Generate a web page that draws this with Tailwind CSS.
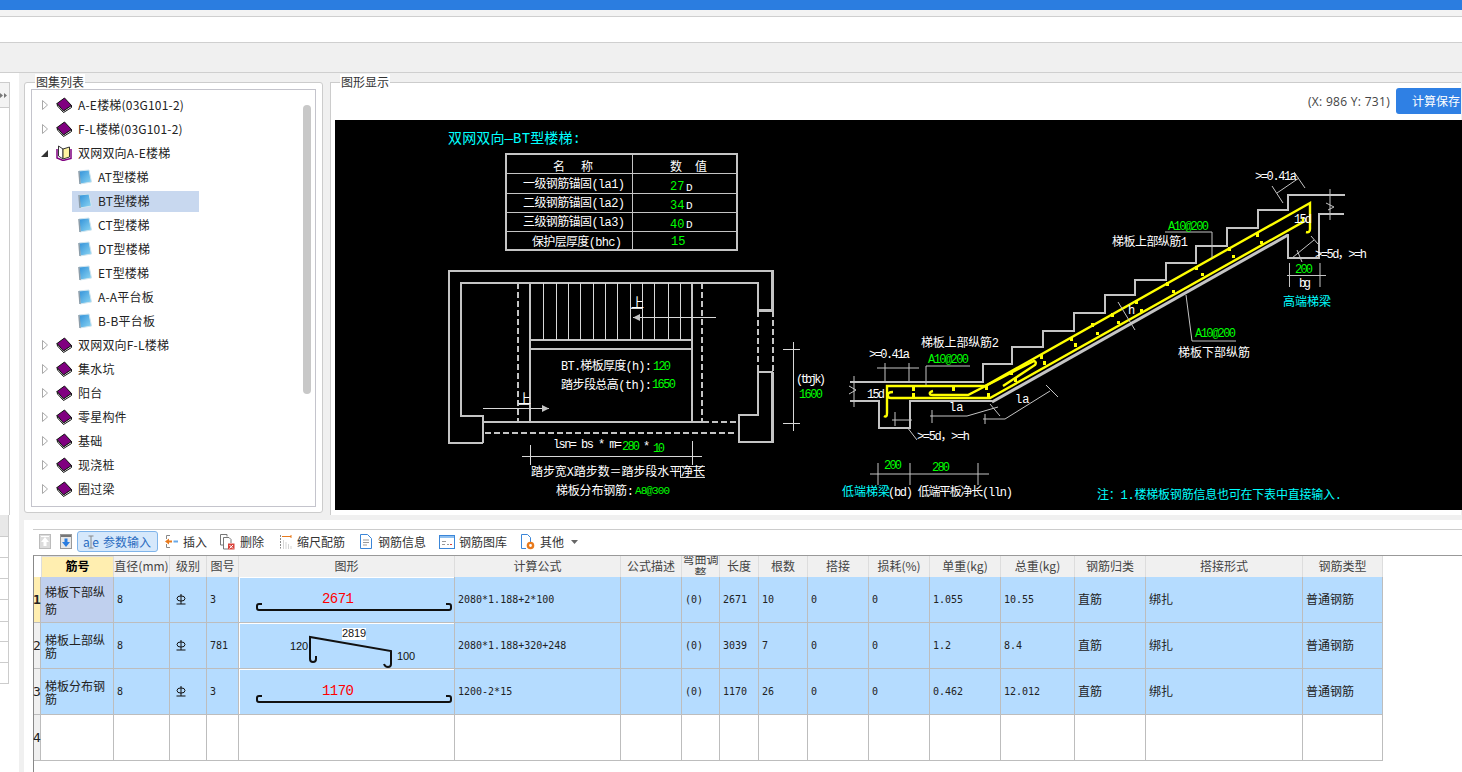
<!DOCTYPE html>
<html lang="zh-CN">
<head>
  <meta charset="UTF-8" />
  <title>图集列表</title>
  <script src="https://cdn.jsdelivr.net/npm/@tailwindcss/browser@4"></script>
</head>
<body class="w-[1462px] h-[772px] overflow-hidden bg-white text-xs text-[#222] font-['Noto_Sans_CJK_SC',sans-serif]">
  <!-- shared icons -->
  <svg width="0" height="0" class="absolute">
    <defs>
      <linearGradient id="pageFill" x1="0" y1="0" x2="1" y2="1"><stop offset="0" stop-color="#2f8fd8"/><stop offset="1" stop-color="#8fd8f4"/></linearGradient>
      <symbol id="book" viewBox="0 0 16 16">
        <path d="M1 6.5 L8.5 1 L15.5 8.5 L7.5 14 Z" fill="#800080" stroke="#111" stroke-width="1"/>
        <path d="M1 6.5 L1.5 9 L7.5 15.5 L15.5 10.5 L15.5 8.5 L7.5 14 Z" fill="#fff" stroke="#111" stroke-width="1"/>
      </symbol>
      <symbol id="openbook" viewBox="0 0 16 16">
        <path d="M2.5 1 L7 4 L7 14 L2.5 11 Z" fill="#fff" stroke="#333" stroke-width="1"/>
        <path d="M7 4 L13.5 2 L13.5 12 L7 14 Z" fill="#fdf3a0" stroke="#333" stroke-width="1"/>
        <path d="M1 4 L1 13 L7 15.5 L15 13.5 L15 4" fill="none" stroke="#800080" stroke-width="1.5"/>
      </symbol>
      <symbol id="page" viewBox="0 0 14 16">
        <path d="M1 2 L11 1 L13.5 13 L2 15 Z" fill="url(#pageFill)" stroke="#cfe4ee" stroke-width="1"/>
        <path d="M1 2 L2 15" stroke="#8c9ca8" stroke-width="1.5"/>
      </symbol>
      <symbol id="closed" viewBox="0 0 6 10"><path d="M.5 .5 L5.5 5 L.5 9.5 Z" fill="#fff" stroke="#a8a8a8"/></symbol>
      <symbol id="grade" viewBox="0 0 10 11">
        <ellipse cx="5" cy="4.5" rx="4" ry="2.6" fill="none" stroke="#111"/>
        <path d="M5 0 V10 M.5 10 H9.5" stroke="#111" fill="none"/>
      </symbol>
    </defs>
  </svg>

  <!-- title bars -->
  <div class="h-[10px] bg-[#2b7de0]"></div>
  <div class="h-[7px] bg-[#f3f3f3] border-b border-[#cfcfcf]"></div>
  <div class="h-[26px] bg-white border-b border-[#cfcfcf]"></div>
  <div class="h-[30px] bg-[#f0f0f0] border-b border-[#cfcfcf]"></div>

  <!-- upper panels -->
  <div class="flex h-[442px] bg-[#f0f0f0]">
    <div class="w-[19px] bg-white pt-[9px]">
      <div class="w-[10px] h-[433px] border-t border-r border-[#ccc] bg-white">
        <div class="h-[25px] bg-[#f3f3f3] border-b border-[#ccc] flex items-center">
          <svg class="w-2 h-[5px]" viewBox="0 0 8 5"><path d="M0 0L3 2.5L0 5ZM4 0L7 2.5L4 5Z" fill="#777"/></svg>
        </div>
      </div>
    </div>

    <!-- tree group -->
    <div class="relative ml-[5px] mt-[9px] w-[299px] h-[431px] rounded-[3px] border border-[#ccc] bg-white p-[6px]">
      <span class="absolute -top-[9px] left-[10px] px-px leading-4 text-[#333] bg-white">图集列表</span>
      <div class="relative w-[285px] h-[418px] border border-[#c4c4cc] overflow-hidden pt-[3px]">
        <div class="absolute left-[271px] top-[15px] w-2 h-[289px] rounded bg-[#c8c8c8]"></div>
        <ul class="leading-6 tracking-[0.2px]">
          <li class="h-6 flex items-center"><svg class="ml-[10px] w-[6px] h-[10px]"><use href="#closed"/></svg><svg class="ml-[8px] w-4 h-4"><use href="#book"/></svg><span class="ml-[6px]">A-E楼梯(03G101-2)</span></li>
          <li class="h-6 flex items-center"><svg class="ml-[10px] w-[6px] h-[10px]"><use href="#closed"/></svg><svg class="ml-[8px] w-4 h-4"><use href="#book"/></svg><span class="ml-[6px]">F-L楼梯(03G101-2)</span></li>
          <li class="h-6 flex items-center"><svg class="ml-[9px] w-[7px] h-[7px]" viewBox="0 0 7 7"><path d="M0 7 L7 7 L7 0 Z" fill="#333"/></svg><svg class="ml-[8px] w-4 h-4"><use href="#openbook"/></svg><span class="ml-[6px]">双网双向A-E楼梯</span></li>
          <li class="h-6 flex items-center"><svg class="ml-[46px] w-[14px] h-4"><use href="#page"/></svg><span class="ml-[6px]">AT型楼梯</span></li>
          <li class="h-6 flex items-center"><div class="ml-[40px] w-[127px] h-[21px] bg-[#c8d8ef] flex items-center"><svg class="ml-[6px] w-[14px] h-4"><use href="#page"/></svg><span class="ml-[6px]">BT型楼梯</span></div></li>
          <li class="h-6 flex items-center"><svg class="ml-[46px] w-[14px] h-4"><use href="#page"/></svg><span class="ml-[6px]">CT型楼梯</span></li>
          <li class="h-6 flex items-center"><svg class="ml-[46px] w-[14px] h-4"><use href="#page"/></svg><span class="ml-[6px]">DT型楼梯</span></li>
          <li class="h-6 flex items-center"><svg class="ml-[46px] w-[14px] h-4"><use href="#page"/></svg><span class="ml-[6px]">ET型楼梯</span></li>
          <li class="h-6 flex items-center"><svg class="ml-[46px] w-[14px] h-4"><use href="#page"/></svg><span class="ml-[6px]">A-A平台板</span></li>
          <li class="h-6 flex items-center"><svg class="ml-[46px] w-[14px] h-4"><use href="#page"/></svg><span class="ml-[6px]">B-B平台板</span></li>
          <li class="h-6 flex items-center"><svg class="ml-[10px] w-[6px] h-[10px]"><use href="#closed"/></svg><svg class="ml-[8px] w-4 h-4"><use href="#book"/></svg><span class="ml-[6px]">双网双向F-L楼梯</span></li>
          <li class="h-6 flex items-center"><svg class="ml-[10px] w-[6px] h-[10px]"><use href="#closed"/></svg><svg class="ml-[8px] w-4 h-4"><use href="#book"/></svg><span class="ml-[6px]">集水坑</span></li>
          <li class="h-6 flex items-center"><svg class="ml-[10px] w-[6px] h-[10px]"><use href="#closed"/></svg><svg class="ml-[8px] w-4 h-4"><use href="#book"/></svg><span class="ml-[6px]">阳台</span></li>
          <li class="h-6 flex items-center"><svg class="ml-[10px] w-[6px] h-[10px]"><use href="#closed"/></svg><svg class="ml-[8px] w-4 h-4"><use href="#book"/></svg><span class="ml-[6px]">零星构件</span></li>
          <li class="h-6 flex items-center"><svg class="ml-[10px] w-[6px] h-[10px]"><use href="#closed"/></svg><svg class="ml-[8px] w-4 h-4"><use href="#book"/></svg><span class="ml-[6px]">基础</span></li>
          <li class="h-6 flex items-center"><svg class="ml-[10px] w-[6px] h-[10px]"><use href="#closed"/></svg><svg class="ml-[8px] w-4 h-4"><use href="#book"/></svg><span class="ml-[6px]">现浇桩</span></li>
          <li class="h-6 flex items-center"><svg class="ml-[10px] w-[6px] h-[10px]"><use href="#closed"/></svg><svg class="ml-[8px] w-4 h-4"><use href="#book"/></svg><span class="ml-[6px]">圈过梁</span></li>
        </ul>
      </div>
    </div>

    <!-- drawing group -->
    <div class="relative ml-[7px] mt-[9px] w-[1131px] h-[433px] border-t border-l border-[#ccc] bg-white pl-[4px]">
      <span class="absolute -top-[9px] left-[9px] px-px leading-4 text-[#333] bg-white">图形显示</span>
      <div class="h-[37px] flex justify-end items-start pt-[5px]">
        <span class="mt-[6px] text-[#444] tracking-[0.3px] font-['Open_Sans',sans-serif]">(X: 986 Y: 731)</span>
        <button class="ml-[6px] w-[65px] h-[26px] rounded-l-[3px] bg-[#2f80e4] text-white text-left pl-4">计算保存</button>
      </div>
      <svg class="block bg-black" width="1127" height="390" viewBox="335 120 1127 390" font-family="'Liberation Mono','Noto Sans CJK SC',monospace" font-size="12" fill="#fff">
        <!-- parameter table -->
        <text x="448" y="143" font-size="14" fill="#0ff" textLength="133">双网双向—BT型楼梯:</text>
        <g shape-rendering="crispEdges" stroke="#c4c4c4" fill="none">
          <rect x="506" y="154" width="231" height="96" stroke-width="2"/>
          <path d="M632 154V250M506 173H737M506 193H737M506 212H737M506 231H737"/>
        </g>
        <text x="553" y="171" textLength="40">名 称</text><text x="670" y="171" textLength="37">数 值</text>
        <text x="523" y="188" textLength="102">一级钢筋锚固(la1)</text><text x="670" y="190" fill="#0f0">27</text><text x="686" y="191" font-size="11">D</text>
        <text x="523" y="207" textLength="102">二级钢筋锚固(la2)</text><text x="670" y="209" fill="#0f0">34</text><text x="686" y="209" font-size="11">D</text>
        <text x="523" y="226" textLength="102">三级钢筋锚固(la3)</text><text x="670" y="228" fill="#0f0">40</text><text x="686" y="228" font-size="11">D</text>
        <text x="532" y="246" textLength="90">保护层厚度(bhc)</text><text x="671" y="245" fill="#0f0">15</text>

        <!-- stair plan -->
        <g shape-rendering="crispEdges" stroke="#c4c4c4" fill="none" stroke-width="2.5">
          <path d="M483 443H449V271H772.5V310.5H758V283H461V416H483V443"/>
          <path d="M772.5 372H758V415H739V442H772.5V372"/>
          <path d="M530 283V422M692 283V422M483 422H703" stroke-width="2"/>
          <path d="M518 283V422M702 283V422M758 311V372M772.5 311V372M703 422H738M485 433H737" stroke-width="2" stroke-dasharray="6 3"/>
          <path d="M530 340H692M530 349H692" stroke-width="2"/>
        </g>
        <g shape-rendering="crispEdges" stroke="#d8d8d8" fill="none">
          <path d="M543 283V340M556 283V340M568 283V340M580 283V340M593 283V340M605 283V340M617 283V340M630 283V340M642 283V340M654 283V340M668 283V340M680 283V340"/>
          <path d="M631 308.5H643M633 317.5H716M519 404.5H530M483 408.5H549"/>
          <path d="M793 342V431M783 349H800M783 423H800M522 456.5H702M530 445V465M692.5 441V465"/>
          <path d="M680 466H705M680 477H705M680 466V477"/>
        </g>
        <path d="M633 317.5 L640 314 V321 Z M549 408.5 L542 405 V412 Z" fill="#c4c4c4"/>
        <text x="631" y="307" font-size="13">上</text><text x="518" y="403" font-size="13">上</text>
        <text x="561" y="370" textLength="91">BT.梯板厚度(h):</text><text x="653" y="370" fill="#0f0" textLength="18">120</text>
        <text x="561" y="389" textLength="91">踏步段总高(th):</text><text x="652" y="388" fill="#0f0" textLength="24">1650</text>
        <text x="796" y="383" textLength="30">(tbjk)</text><text x="799" y="398" fill="#0f0" textLength="24">1600</text>
        <text x="553" y="448" textLength="69">lsn= bs * m=</text><text x="622" y="450" fill="#0f0" textLength="18">280</text><text x="643" y="450">*</text><text x="653" y="452" fill="#0f0" textLength="12">10</text>
        <text x="531" y="476" textLength="174">踏步宽X踏步数＝踏步段水平净长</text>
        <text x="556" y="495" textLength="78">梯板分布钢筋:</text><text x="635" y="494" fill="#0f0" textLength="35" font-size="11">A8@300</text>

        <!-- stair section: concrete -->
        <g shape-rendering="crispEdges" stroke="#c4c4c4" fill="none" stroke-width="2">
          <path d="M850 382H983V364H1012V347H1043V331H1074V313H1105V295H1135V280H1166V263H1196V246H1227V228H1258V210H1288V195H1345"/>
          <path d="M850 400.5H879V428H910V401H992"/>
          <path d="M1288 234V258H1319V214H1344"/>
        </g>
        <path d="M992 402L1288 235" stroke="#c4c4c4" stroke-width="3" fill="none"/>
        <!-- stair section: rebar -->
        <g stroke="#ff0" stroke-width="2.4" fill="none">
          <path d="M884 416 Q887 418 887 413 V386 H985 L1310 203 V229 Q1310 233 1306 232"/>
          <path d="M893 392 Q887 392 888 396 Q888 398 891 398 H990 L1303 222 V218"/>
          <path d="M933 391 Q929 392 930 394 Q930 395 933 395 H968 L1034 361 Q1037 362 1035 365 L1003 386"/>
        </g>
        <g fill="#ff0">
          <rect x="912" y="386" width="3" height="5"/><rect x="952" y="386" width="3" height="5"/><rect x="985" y="385" width="3" height="5"/><rect x="1010" y="371" width="3" height="4"/><rect x="1040" y="355" width="3" height="4"/><rect x="1070" y="337" width="3" height="4"/>
          <rect x="912" y="393" width="3" height="5"/><rect x="987" y="393" width="3" height="5"/><rect x="1014" y="378" width="3" height="4"/><rect x="1043" y="361" width="3" height="4"/><rect x="1074" y="343" width="3" height="4"/>
          <rect x="1091" y="323" width="3" height="4"/><rect x="1111" y="313" width="3" height="4"/><rect x="1135" y="300" width="3" height="4"/><rect x="1166" y="282" width="3" height="4"/><rect x="1195" y="266" width="3" height="4"/><rect x="1228" y="247" width="3" height="4"/><rect x="1256" y="233" width="3" height="4"/>
          <rect x="1096" y="332" width="3" height="3"/><rect x="1117" y="321" width="3" height="3"/><rect x="1140" y="309" width="3" height="3"/><rect x="1172" y="290" width="3" height="3"/><rect x="1201" y="273" width="3" height="3"/><rect x="1232" y="255" width="3" height="3"/><rect x="1260" y="241" width="3" height="3"/>
        </g>
        <!-- stair section: dimensions -->
        <g stroke="#c4c4c4" fill="none">
          <path d="M877 368H919M885 363V382M909 363V382M854 376V407M849 386L856 390L849 394"/>
          <path d="M926 385V366H970M930 416H967L998 407M932 410V423M990 404L1000 416"/>
          <path d="M983 419H1005L1050 391M985 414V424M1046 385L1058 397"/>
          <path d="M892 420H912M895 412V426M907 427L917 440"/>
          <path d="M870 474H989M878 463V485M910 463V485M978 463V485"/>
          <path d="M1277 193L1299 178M1272 186L1283 203M1294 172L1305 188"/>
          <path d="M1165 232H1212V258M1186 295L1192 341H1236"/>
          <path d="M1292 258L1314 240M1297 250L1302 262M1311 236L1318 244"/>
          <path d="M1287 275.5H1326M1289.5 263V287M1320 263V287M1330 189V220M1326 203L1334 207L1328 210"/>
          <path d="M1118 302L1135 330"/>
        </g>
        <text x="869" y="358" textLength="41">&gt;=0.41a</text>
        <text x="867" y="398" textLength="18">15d</text>
        <text x="921" y="347" textLength="78">梯板上部纵筋2</text>
        <text x="928" y="363" fill="#0f0" textLength="41">A10@200</text>
        <text x="949" y="411">la</text><text x="1015" y="403">la</text>
        <text x="917" y="440" textLength="53">&gt;=5d，&gt;=h</text>
        <text x="884" y="469" fill="#0f0" textLength="18">200</text><text x="932" y="471" fill="#0f0" textLength="18">280</text>
        <text x="842" y="496" fill="#0ff" textLength="48">低端梯梁</text>
        <text x="888" y="496" textLength="125">(bd) 低端平板净长(lln)</text>
        <text x="1097" y="499" fill="#0ff" textLength="245">注：1.楼梯板钢筋信息也可在下表中直接输入.</text>
        <text x="1255" y="180" textLength="42">&gt;=0.41a</text>
        <text x="1168" y="230" fill="#0f0" textLength="41">A10@200</text>
        <text x="1112" y="246" textLength="76">梯板上部纵筋1</text>
        <text x="1294" y="223" textLength="18">15d</text>
        <text x="1315" y="258" textLength="52">&gt;=5d，&gt;=h</text>
        <text x="1295" y="273" fill="#0f0" textLength="18">200</text>
        <text x="1299" y="287" textLength="12">bg</text>
        <text x="1283" y="306" fill="#0ff" textLength="48">高端梯梁</text>
        <text x="1128" y="314">h</text>
        <text x="1195" y="337" fill="#0f0" textLength="41">A10@200</text>
        <text x="1178" y="357" textLength="72">梯板下部纵筋</text>
      </svg>
    </div>
  </div>

  <!-- lower area -->
  <div class="flex h-[257px]">
    <div class="w-[19px] bg-white">
      <div class="w-[9px] border-r border-[#ccc]">
        <div class="h-[22px] bg-[#e8e8e8] border-b border-[#ccc]"></div>
        <div class="h-[21px] border-b border-[#ccc]"></div>
        <div class="h-[21px] border-b border-[#ccc]"></div>
        <div class="h-[21px] border-b border-[#ccc]"></div>
        <div class="h-[22px] border-b border-[#ccc]"></div>
        <div class="h-[20px] border-b border-[#ccc]"></div>
        <div class="h-[21px] border-b border-[#ccc]"></div>
        <div class="h-[21px] border-b border-[#ccc]"></div>
      </div>
    </div>
    <div class="w-[5px] bg-[#f0f0f0]"></div>
    <div class="flex-1 bg-white">
      <div class="h-[5px] -ml-[5px] bg-[#f0f0f0]"></div>
      <div class="ml-[9px] mt-[9px] border-t border-[#ccc]">
        <!-- toolbar -->
        <div class="h-[25px] flex items-center pl-[6px] pb-[2px] text-[#333]">
          <svg class="w-3 h-[15px]" viewBox="0 0 12 15"><rect x=".5" y=".5" width="11" height="14" fill="#dcdcdc" stroke="#bbb"/><path d="M6 3L10 8H7.5V12H4.5V8H2Z" fill="#fff"/><path d="M2 2.5H10" stroke="#fff"/></svg>
          <svg class="ml-[9px] w-3 h-[15px]" viewBox="0 0 12 15"><rect x=".5" y=".5" width="11" height="14" fill="#e8e8e8" stroke="#999"/><rect x="1" y="1" width="10" height="2" fill="#777"/><path d="M6 13L2 8H4.5V4.5H7.5V8H10Z" fill="#2b7de0"/></svg>
          <div class="ml-[5px] w-[81px] h-[21px] rounded-[3px] border border-[#7fb4ea] bg-[#d6e8fb] flex items-center text-[#2a6cc0]">
            <svg class="ml-[5px] w-4 h-[14px]" viewBox="0 0 16 14"><path d="M5.5 1H10.5M8 1V13M5.5 13H10.5" stroke="#888" fill="none"/></svg>
            <span class="-ml-4 w-4 flex justify-between text-[12px] leading-none"><span>a</span><span>e</span></span>
            <span class="ml-[4px]">参数输入</span>
          </div>
          <svg class="ml-[7px] w-[13px] h-[15px]" viewBox="0 0 13 15"><path d="M5 1.5H1.5V5M5 13.5H1.5V10" fill="none" stroke="#888"/><path d="M0 7.5L4 4.5V6.5H7V8.5H4V10.5Z" fill="#e87a1d"/><rect x="8.5" y="6.5" width="4.5" height="2" fill="#6aa9e8"/></svg>
          <span class="ml-[5px]">插入</span>
          <svg class="ml-[13px] w-[15px] h-4" viewBox="0 0 15 16"><path d="M.5 .5H7V2.5M.5 .5V11H3.5M3.5 3.5H9L11 5.5V9M3.5 3.5V15H8" fill="#fff" stroke="#777"/><rect x="8" y="9.5" width="6.5" height="6" fill="#d9423a"/><path d="M9.5 11L13 14.5M13 11L9.5 14.5" stroke="#fff"/></svg>
          <span class="ml-[5px]">删除</span>
          <svg class="ml-[15px] w-[13px] h-[15px]" viewBox="0 0 13 15"><path d="M1.5 1V14.5" stroke="#888" fill="none" stroke-dasharray="2 1"/><path d="M4.5 14.5V6M7 14.5V8M9.5 14.5V10M12 14.5V12" stroke="#aaa" stroke-dasharray="1 1"/><path d="M3 2.5H12M12 1V4" stroke="#e87a1d"/></svg>
          <span class="ml-[5px]">缩尺配筋</span>
          <svg class="ml-[14px] w-[13px] h-[15px]" viewBox="0 0 13 15"><path d="M1.5 .5H8.5L12.5 4.5V14.5H1.5Z" fill="#fff" stroke="#3b86d8"/><path d="M4 6H10M4 8.5H10M4 11H8" stroke="#999"/></svg>
          <span class="ml-[6px]">钢筋信息</span>
          <svg class="ml-[13px] w-4 h-[14px]" viewBox="0 0 16 14"><rect x=".5" y=".5" width="15" height="13" fill="#fff" stroke="#3b86d8"/><rect x="1" y="1" width="14" height="2" fill="#8fc0f0"/><path d="M3 6.5H7M3 9.5H6M8 9.5H10" stroke="#999"/><path d="M11 9.5H13" stroke="#d9423a"/></svg>
          <span class="ml-[4px]">钢筋图库</span>
          <svg class="ml-[13px] w-[15px] h-4" viewBox="0 0 15 16"><path d="M1.5 .5H7.5L10.5 3.5V9M1.5 .5V14.5H6" fill="#fff" stroke="#3b86d8"/><circle cx="10.5" cy="11.5" r="2.6" fill="none" stroke="#e87a1d" stroke-width="2.4"/></svg>
          <span class="ml-[5px]">其他</span>
          <svg class="ml-[7px] w-[7px] h-1" viewBox="0 0 7 4"><path d="M0 0H7L3.5 4Z" fill="#666"/></svg>
        </div>
        <!-- rebar table -->
        <div class="border-t border-t-[#999] border-l border-l-[#888] h-[217px]">
          <table class="table-fixed w-[1349px] border-separate border-spacing-0 [&_td]:border-r [&_td]:border-b [&_td]:border-[#bdbdbd] [&_td]:px-[3px] [&_td]:h-[46px] [&_td]:font-['DejaVu_Sans_Mono','Noto_Sans_CJK_SC',monospace] [&_td]:text-[10px] [&_th]:h-[21px] [&_th]:pb-[2px] [&_th]:border-r [&_th]:border-[#ddd] [&_th]:bg-[#f0f0f0] [&_th]:font-normal [&_th]:text-[#444] [&_th]:px-0 [&_th]:pt-0">
            <colgroup>
              <col class="w-[7px]"><col class="w-[73px]"><col class="w-[56px]"><col class="w-[37px]"><col class="w-[32px]"><col class="w-[216px]"><col class="w-[166px]"><col class="w-[61px]"><col class="w-[38px]"><col class="w-[39px]"><col class="w-[49px]"><col class="w-[61px]"><col class="w-[61px]"><col class="w-[71px]"><col class="w-[74px]"><col class="w-[71px]"><col class="w-[157px]"><col class="w-[80px]">
            </colgroup>
            <thead>
              <tr>
                <th class="!bg-white !border-0"></th>
                <th class="!bg-[#ffeeb0] !text-black !font-bold border-t border-l border-[#7fb4ea]">筋号</th>
                <th>直径(mm)</th><th>级别</th><th>图号</th><th>图形</th><th>计算公式</th><th>公式描述</th>
                <th><div class="h-[19px] overflow-hidden flex items-center justify-center leading-[14px]"><span>弯曲调整</span></div></th>
                <th>长度</th><th>根数</th><th>搭接</th><th>损耗(%)</th><th>单重(kg)</th><th>总重(kg)</th><th>钢筋归类</th><th>搭接形式</th><th>钢筋类型</th>
              </tr>
            </thead>
            <tbody class="[&_tr:not(:last-child)_td]:bg-[#b5dcff]">
              <tr>
                <td class="!p-0 !bg-[#ffeeb0] text-center"><b class="-ml-px text-[13px]">1</b></td>
                <td class="!bg-[#c0d0ee] !pl-1"><span class="block text-xs leading-[17px] text-[#222] font-['Noto_Sans_CJK_SC',sans-serif]">梯板下部纵筋</span></td>
                <td>8</td><td><svg class="ml-[3px] w-[10px] h-[11px]"><use href="#grade"/></svg></td><td>3</td>
                <td class="!p-0 !bg-white">
                  <svg class="block w-[214px] h-11 mx-px bg-[#b5dcff]" viewBox="239 577 214 44" font-family="'Liberation Mono',monospace"><path d="M261 603H258Q256 603 256 605V607Q256 609 258 609H448Q450 609 450 607V605Q450 603 448 603H445" fill="none" stroke="#111" stroke-width="2"/><text x="321" y="602" fill="#f00" font-size="14" textLength="32">2671</text></svg>
                </td>
                <td>2080*1.188+2*100</td><td></td><td>(0)</td><td>2671</td><td>10</td><td>0</td><td>0</td><td>1.055</td><td>10.55</td>
                <td><span class="text-xs font-['Noto_Sans_CJK_SC',sans-serif]">直筋</span></td><td><span class="text-xs font-['Noto_Sans_CJK_SC',sans-serif]">绑扎</span></td><td><span class="text-xs font-['Noto_Sans_CJK_SC',sans-serif]">普通钢筋</span></td>
              </tr>
              <tr>
                <td class="!p-0 !bg-[#f0f0f0] text-center"><span class="-ml-px text-[13px]">2</span></td>
                <td class="!pl-1"><span class="block text-xs leading-[13px] font-['Noto_Sans_CJK_SC',sans-serif]">梯板上部纵筋</span></td>
                <td>8</td><td><svg class="ml-[3px] w-[10px] h-[11px]"><use href="#grade"/></svg></td><td>781</td>
                <td class="!p-0 !bg-white">
                  <svg class="block w-[214px] h-11 mx-px bg-[#b5dcff]" viewBox="239 623 214 44" font-family="'Liberation Sans',sans-serif"><path d="M315 655V658Q315 661 312 661Q309 661 309 658V636L390 650V663Q390 666 387 666Q384 666 383 663" fill="none" stroke="#111" stroke-width="2"/><rect x="341" y="627" width="24" height="12" fill="#fff"/><g font-size="11" fill="#111"><text x="289" y="649" textLength="18">120</text><text x="341" y="636" textLength="24">2819</text><text x="396" y="659" textLength="18">100</text></g></svg>
                </td>
                <td>2080*1.188+320+248</td><td></td><td>(0)</td><td>3039</td><td>7</td><td>0</td><td>0</td><td>1.2</td><td>8.4</td>
                <td><span class="text-xs font-['Noto_Sans_CJK_SC',sans-serif]">直筋</span></td><td><span class="text-xs font-['Noto_Sans_CJK_SC',sans-serif]">绑扎</span></td><td><span class="text-xs font-['Noto_Sans_CJK_SC',sans-serif]">普通钢筋</span></td>
              </tr>
              <tr>
                <td class="!p-0 !bg-[#f0f0f0] text-center"><span class="-ml-px text-[13px]">3</span></td>
                <td class="!pl-1"><span class="block text-xs leading-[13px] font-['Noto_Sans_CJK_SC',sans-serif]">梯板分布钢筋</span></td>
                <td>8</td><td><svg class="ml-[3px] w-[10px] h-[11px]"><use href="#grade"/></svg></td><td>3</td>
                <td class="!p-0 !bg-white">
                  <svg class="block w-[214px] h-11 mx-px bg-[#b5dcff]" viewBox="239 669 214 44" font-family="'Liberation Mono',monospace"><path d="M261 695H258Q256 695 256 697V699Q256 701 258 701H448Q450 701 450 699V697Q450 695 448 695H445" fill="none" stroke="#111" stroke-width="2"/><text x="321" y="694" fill="#f00" font-size="14" textLength="32">1170</text></svg>
                </td>
                <td>1200-2*15</td><td></td><td>(0)</td><td>1170</td><td>26</td><td>0</td><td>0</td><td>0.462</td><td>12.012</td>
                <td><span class="text-xs font-['Noto_Sans_CJK_SC',sans-serif]">直筋</span></td><td><span class="text-xs font-['Noto_Sans_CJK_SC',sans-serif]">绑扎</span></td><td><span class="text-xs font-['Noto_Sans_CJK_SC',sans-serif]">普通钢筋</span></td>
              </tr>
              <tr>
                <td class="!p-0 !bg-[#f0f0f0] text-center"><span class="-ml-px text-[13px]">4</span></td>
                <td></td><td></td><td></td><td></td><td></td><td></td><td></td><td></td><td></td><td></td><td></td><td></td><td></td><td></td><td></td><td></td><td></td>
              </tr>
            </tbody>
          </table>
        </div>
      </div>
    </div>
  </div>
</body>
</html>
